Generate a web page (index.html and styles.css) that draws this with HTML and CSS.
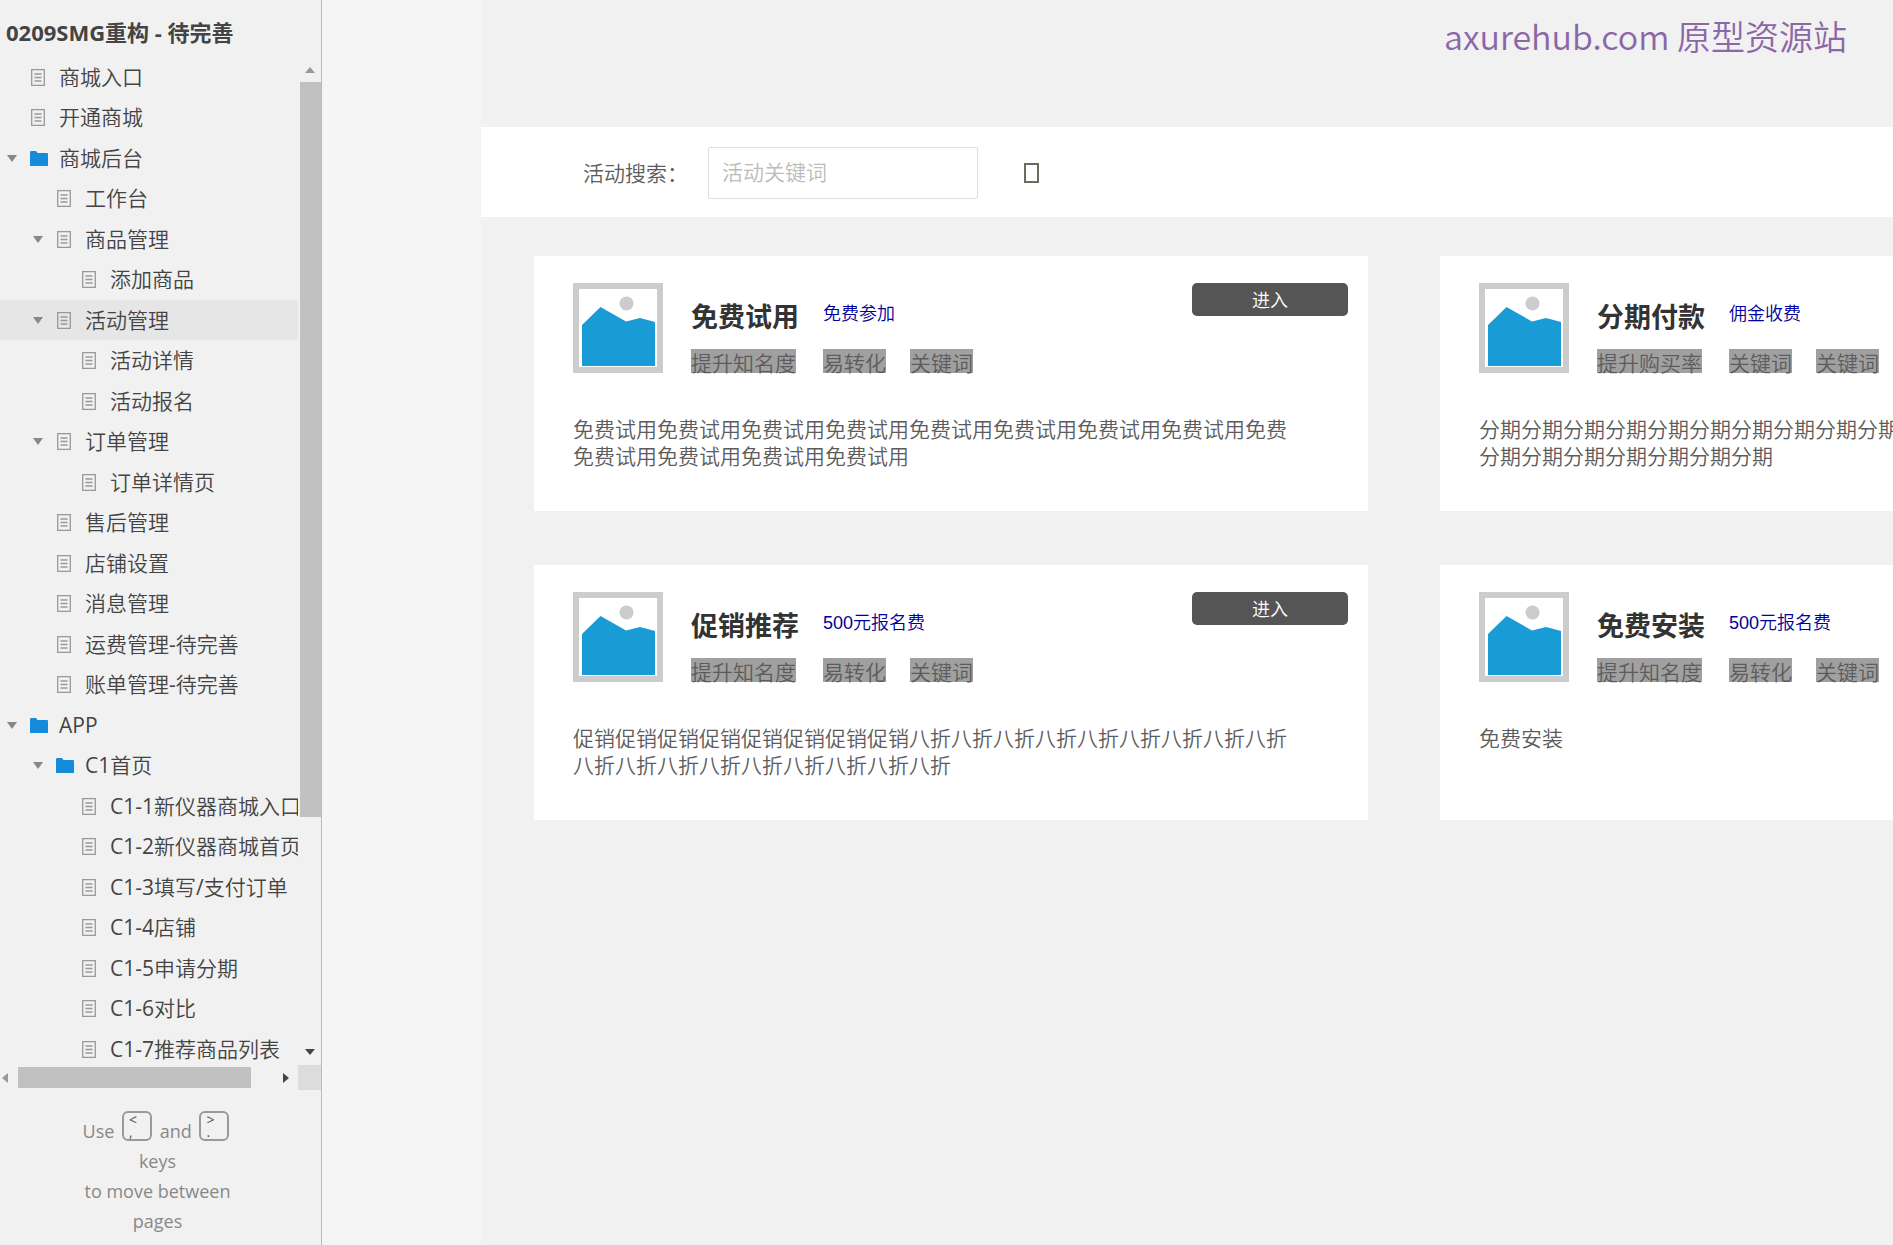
FILE: index.html
```html
<!DOCTYPE html>
<html lang="zh-CN">
<head>
<meta charset="utf-8">
<title>0209SMG重构 - 待完善</title>
<link rel="stylesheet" href="styles.css">
</head>
<body>
<svg class="symbols" aria-hidden="true">
  <symbol id="page" viewBox="0 0 14 17">
    <path d="M.7.7h12.600v15.600H.7zM3.500 5h7M3.500 8.500h7M3.500 12h7" fill="none" stroke="#999" stroke-width="1.300"/>
  </symbol>
  <symbol id="folder" viewBox="0 0 18 15">
    <path d="M0 1.500Q0 0 1 0h5l1.500 2H17q1 0 1 1v12H0z" fill="#168adb"/>
  </symbol>
  <symbol id="picture" viewBox="0 0 90 90">
    <path d="M3 3h84v84H3z" fill="#fff" stroke="#ccc" stroke-width="6"/>
    <circle cx="53.500" cy="20.500" r="7" fill="#ccc"/>
    <path d="M9 42L27.500 24 53 38.500 67 35l15 4v44H9z" fill="#199bd5"/>
  </symbol>
</svg>
<div class="app">
  <aside class="sidebar">
    <h1 class="project">0209SMG重构 - 待完善</h1>
    <div class="tree-area">
      <ul class="tree">
        <li class="node"><span class="arrow"></span><svg class="doc"><use href="#page"/></svg><a href="#">商城入口</a></li>
        <li class="node"><span class="arrow"></span><svg class="doc"><use href="#page"/></svg><a href="#">开通商城</a></li>
        <li class="node"><span class="arrow open"></span><svg class="folder"><use href="#folder"/></svg><a href="#">商城后台</a></li>
        <li class="node level-2"><span class="arrow"></span><svg class="doc"><use href="#page"/></svg><a href="#">工作台</a></li>
        <li class="node level-2"><span class="arrow open"></span><svg class="doc"><use href="#page"/></svg><a href="#">商品管理</a></li>
        <li class="node level-3"><span class="arrow"></span><svg class="doc"><use href="#page"/></svg><a href="#">添加商品</a></li>
        <li class="node level-2 current"><span class="arrow open"></span><svg class="doc"><use href="#page"/></svg><a href="#">活动管理</a></li>
        <li class="node level-3"><span class="arrow"></span><svg class="doc"><use href="#page"/></svg><a href="#">活动详情</a></li>
        <li class="node level-3"><span class="arrow"></span><svg class="doc"><use href="#page"/></svg><a href="#">活动报名</a></li>
        <li class="node level-2"><span class="arrow open"></span><svg class="doc"><use href="#page"/></svg><a href="#">订单管理</a></li>
        <li class="node level-3"><span class="arrow"></span><svg class="doc"><use href="#page"/></svg><a href="#">订单详情页</a></li>
        <li class="node level-2"><span class="arrow"></span><svg class="doc"><use href="#page"/></svg><a href="#">售后管理</a></li>
        <li class="node level-2"><span class="arrow"></span><svg class="doc"><use href="#page"/></svg><a href="#">店铺设置</a></li>
        <li class="node level-2"><span class="arrow"></span><svg class="doc"><use href="#page"/></svg><a href="#">消息管理</a></li>
        <li class="node level-2"><span class="arrow"></span><svg class="doc"><use href="#page"/></svg><a href="#">运费管理-待完善</a></li>
        <li class="node level-2"><span class="arrow"></span><svg class="doc"><use href="#page"/></svg><a href="#">账单管理-待完善</a></li>
        <li class="node"><span class="arrow open"></span><svg class="folder"><use href="#folder"/></svg><a href="#">APP</a></li>
        <li class="node level-2"><span class="arrow open"></span><svg class="folder"><use href="#folder"/></svg><a href="#">C1首页</a></li>
        <li class="node level-3"><span class="arrow"></span><svg class="doc"><use href="#page"/></svg><a href="#">C1-1新仪器商城入口</a></li>
        <li class="node level-3"><span class="arrow"></span><svg class="doc"><use href="#page"/></svg><a href="#">C1-2新仪器商城首页</a></li>
        <li class="node level-3"><span class="arrow"></span><svg class="doc"><use href="#page"/></svg><a href="#">C1-3填写/支付订单</a></li>
        <li class="node level-3"><span class="arrow"></span><svg class="doc"><use href="#page"/></svg><a href="#">C1-4店铺</a></li>
        <li class="node level-3"><span class="arrow"></span><svg class="doc"><use href="#page"/></svg><a href="#">C1-5申请分期</a></li>
        <li class="node level-3"><span class="arrow"></span><svg class="doc"><use href="#page"/></svg><a href="#">C1-6对比</a></li>
        <li class="node level-3"><span class="arrow"></span><svg class="doc"><use href="#page"/></svg><a href="#">C1-7推荐商品列表</a></li>
      </ul>
      <div class="vbar">
        <svg class="tip-v" viewBox="0 0 10 6"><path d="M0 6L5 0l5 6z" fill="#999"/></svg>
        <div class="vtrack"><div class="vthumb"></div></div>
        <svg class="tip-v" viewBox="0 0 10 6"><path d="M0 0h10L5 6z" fill="#444"/></svg>
      </div>
      <div class="hbar">
        <svg class="tip-h" viewBox="0 0 6 10"><path d="M6 0v10L0 5z" fill="#999"/></svg>
        <div class="htrack"><div class="hthumb"></div></div>
        <svg class="tip-h" viewBox="0 0 6 10"><path d="M0 0v10l6-5z" fill="#444"/></svg>
      </div>
      <div class="corner"></div>
    </div>
    <p class="hint">Use <kbd><span>&lt;</span><span>,</span></kbd> and <kbd><span>&gt;</span><span>.</span></kbd> keys<br>to move between pages</p>
  </aside>
  <main class="stage">
    <div class="board">
      <header class="top"><span class="mark">axurehub.com 原型资源站</span></header>
      <form class="search">
        <label for="keyword">活动搜索：</label>
        <input id="keyword" type="text" placeholder="活动关键词">
        <button class="find" type="button" aria-label="搜索"></button>
      </form>
      <div class="cards">
        <article class="card">
          <div class="head">
            <svg class="pic"><use href="#picture"/></svg>
            <div class="info">
              <h2>免费试用</h2><a class="fee" href="#">免费参加</a>
              <span class="tag">提升知名度</span><span class="tag">易转化</span><span class="tag">关键词</span>
            </div>
            <button class="enter" type="button">进入</button>
          </div>
          <p class="desc">免费试用免费试用免费试用免费试用免费试用免费试用免费试用免费试用免费<br>免费试用免费试用免费试用免费试用</p>
        </article>
        <article class="card">
          <div class="head">
            <svg class="pic"><use href="#picture"/></svg>
            <div class="info">
              <h2>分期付款</h2><a class="fee" href="#">佣金收费</a>
              <span class="tag">提升购买率</span><span class="tag">关键词</span><span class="tag">关键词</span>
            </div>
          </div>
          <p class="desc">分期分期分期分期分期分期分期分期分期分期分期分期分期分期分期分期分期<br>分期分期分期分期分期分期分期</p>
        </article>
        <article class="card">
          <div class="head">
            <svg class="pic"><use href="#picture"/></svg>
            <div class="info">
              <h2>促销推荐</h2><a class="fee" href="#">500元报名费</a>
              <span class="tag">提升知名度</span><span class="tag">易转化</span><span class="tag">关键词</span>
            </div>
            <button class="enter" type="button">进入</button>
          </div>
          <p class="desc">促销促销促销促销促销促销促销促销八折八折八折八折八折八折八折八折八折<br>八折八折八折八折八折八折八折八折八折</p>
        </article>
        <article class="card">
          <div class="head">
            <svg class="pic"><use href="#picture"/></svg>
            <div class="info">
              <h2>免费安装</h2><a class="fee" href="#">500元报名费</a>
              <span class="tag">提升知名度</span><span class="tag">易转化</span><span class="tag">关键词</span>
            </div>
          </div>
          <p class="desc">免费安装</p>
        </article>
      </div>
    </div>
  </main>
</div>
</body>
</html>
```
FILE: styles.css
```css
* { box-sizing: border-box; }

body {
  margin: 0;
  font: 350 21px/27px "Liberation Sans", "Noto Sans CJK SC", sans-serif;
  color: #5c5c5c;
  background: #f1f1f1;
}

a { color: inherit; text-decoration: none; }
button { border: 0; padding: 0; font: inherit; }
.symbols { position: absolute; width: 0; height: 0; }

.app { display: flex; height: 100vh; overflow: hidden; }

/* Page tree */
.sidebar {
  flex: none;
  display: flex;
  flex-direction: column;
  width: 322px;
  border-right: 1px solid #bbb;
  font-family: "Open Sans", "Noto Sans CJK SC DemiLight", "Noto Sans CJK SC", sans-serif;
  font-weight: 400;
  color: #444;
}

.project {
  margin: 0;
  padding: 8px 6px 0;
  height: 57px;
  font-family: "Open Sans", "Noto Sans CJK SC", sans-serif;
  font-size: 22px;
  line-height: 48px;
  font-weight: 700;
  white-space: nowrap;
}

.tree-area {
  flex: 1;
  min-height: 0;
  display: grid;
  grid-template: minmax(0, 1fr) 25px / minmax(0, 1fr) 23px;
}

.tree { margin: 0; padding: 0; list-style: none; overflow: hidden; }

.node { display: flex; align-items: center; height: 40px; padding-left: 7px; white-space: nowrap; }
.node:nth-child(even) { height: 41px; }
.node a { font-size: 21px; }
.level-2 { padding-left: 33px; }
.level-3 { padding-left: 58px; }
.current { background: #e6e6e6; }

.arrow { flex: none; width: 10px; margin-right: 13px; }
.open { border: solid transparent; border-width: 7px 5px 0; border-top-color: #888; }
.doc { flex: none; width: 16px; height: 17px; margin-right: 13px; }
.folder { flex: none; width: 18px; height: 15px; margin-right: 11px; }

.vbar { display: flex; flex-direction: column; align-items: center; padding: 10px 0; }
.tip-v { width: 10px; height: 6px; }
.vtrack { flex: 1; align-self: stretch; margin: 9px 0 0 2px; }
.vthumb { height: 76%; background: #c1c1c1; }

.hbar { display: flex; align-items: center; padding: 0 9px 0 2px; }
.tip-h { width: 6px; height: 10px; }
.htrack { flex: 1; margin-left: 10px; }
.hthumb { width: 88%; height: 21px; background: #c1c1c1; }
.corner { background: #dcdcdc; }

.hint {
  margin: 0;
  padding: 21px 82px 9px 76px;
  font-size: 18px;
  line-height: 30px;
  text-align: center;
  color: #888;
}

kbd {
  display: inline-flex;
  flex-direction: column;
  width: 30px;
  height: 30px;
  margin: 0 3px;
  padding: 1px 5px;
  border: 2px solid #999;
  border-radius: 6px;
  font: 14px/12px "Open Sans", sans-serif;
  text-align: left;
  vertical-align: 13px;
  color: #555;
}

/* Prototype page */
.stage { flex: 1; min-width: 0; overflow: hidden; padding-left: 159px; background: #f5f5f5; }
.board { min-height: 100%; background: #f1f1f1; }

.top { display: flex; justify-content: flex-end; height: 127px; padding: 12px 46px; }
.mark { font: 350 34px/48px "Noto Sans CJK SC", sans-serif; color: #8b67a8; }

.search { display: flex; align-items: center; height: 90px; padding: 2px 0 0 102px; background: #fff; }
.search label { width: 125px; }
.search input {
  width: 270px;
  height: 52px;
  padding: 0 13px;
  border: 1px solid #ddd;
  border-radius: 2px;
  font: inherit;
}
.search input::placeholder { color: #bbb; }
.find { width: 15px; height: 20px; margin-left: 46px; border: 2px solid #6b6b60; background: none; }

.cards { display: grid; grid-template-columns: repeat(2, 834px); gap: 54px 72px; padding: 39px 53px; }
.card { height: 255px; padding: 27px 20px 0 39px; background: #fff; }
.head { display: flex; align-items: flex-start; }
.pic { width: 90px; height: 90px; }

.info {
  display: grid;
  grid-template-columns: 108px auto auto;
  column-gap: 24px;
  justify-items: start;
  margin: 15px auto 0 28px;
}
.info h2 { margin: 0; font-size: 27px; line-height: 40px; font-weight: 700; color: #333; }
.fee { grid-column: span 2; font-size: 18px; line-height: 32px; color: #00009c; }
.tag { height: 24px; margin-top: 11px; line-height: 29px; background: #a0a0a0; }

.enter { width: 156px; height: 33px; padding-top: 4px; border-radius: 5px; background: #555; color: #fff; font-size: 18px; }
.desc { margin: 43px 0 0; white-space: nowrap; }
```
